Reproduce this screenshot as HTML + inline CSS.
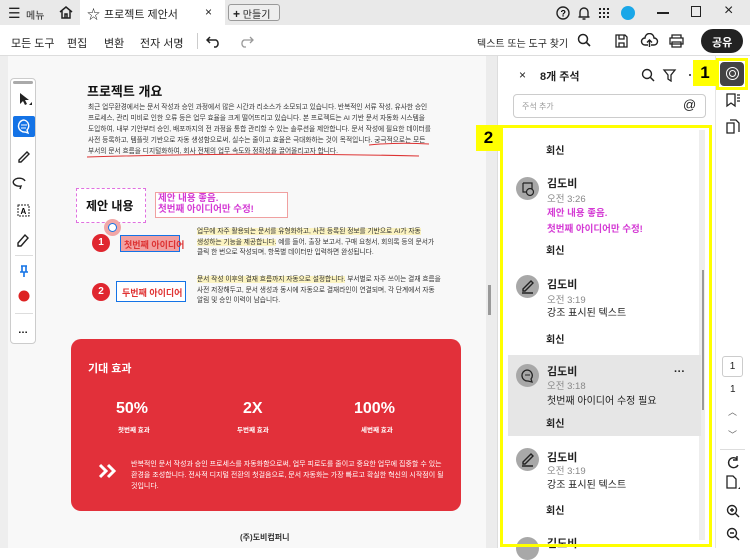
<!DOCTYPE html>
<html><head><meta charset="utf-8"><style>
*{margin:0;padding:0;box-sizing:border-box}
body{width:750px;height:548px;overflow:hidden;position:relative;font-family:"Liberation Sans","Noto Sans CJK KR",sans-serif;background:#fff;color:#222}
.a{position:absolute;white-space:nowrap}
.t{font-size:11px}
.p{font-size:6.7px;color:#333;white-space:nowrap}
.tm{font-size:9.5px;color:#888}
.av{position:absolute;left:516px}
</style></head><body>
<!-- title bar -->
<div class="a" style="left:0;top:0;width:750px;height:25px;background:#e9e9e9"></div>
<div class="a" style="left:80px;top:0;width:145px;height:25px;background:#fff"></div>
<div class="a t" style="left:8px;top:5px;font-size:14px">☰</div>
<div class="a" style="left:26px;top:7px;font-size:10px">메뉴</div>
<svg class="a" style="left:58px;top:5px" width="16" height="15"><path d="M2 7L8 2L14 7M4 6V13H12V6M7 13V9H9V13" fill="none" stroke="#222" stroke-width="1.5"/></svg>
<div class="a" style="left:87px;top:4px;font-size:13px">☆</div>
<div class="a t" style="left:104px;top:6px">프로젝트 제안서</div>
<div class="a" style="left:205px;top:5px;font-size:12px">×</div>
<div class="a" style="left:228px;top:4px;width:52px;height:17px;border:1px solid #999;border-radius:3px;background:#eee;font-size:10px;padding:1px 0 0 4px"><b style="font-size:12px">+</b> 만들기</div>
<svg class="a" style="left:555px;top:5px" width="90" height="16"><circle cx="8" cy="8" r="6" fill="none" stroke="#222" stroke-width="1.4"/><text x="5.5" y="11.5" font-size="9" font-weight="bold">?</text><path d="M25 12V7a4 4 0 0 1 8 0v5h1.5H23.5z M27.5 14h3" fill="none" stroke="#222" stroke-width="1.4"/><g fill="#222"><rect x="44" y="3" width="2" height="2"/><rect x="48" y="3" width="2" height="2"/><rect x="52" y="3" width="2" height="2"/><rect x="44" y="7" width="2" height="2"/><rect x="48" y="7" width="2" height="2"/><rect x="52" y="7" width="2" height="2"/><rect x="44" y="11" width="2" height="2"/><rect x="48" y="11" width="2" height="2"/><rect x="52" y="11" width="2" height="2"/></g><circle cx="73" cy="8" r="7" fill="#1aa7e8"/></svg>
<div class="a" style="left:657px;top:12px;width:12px;height:1.5px;background:#222"></div>
<div class="a" style="left:691px;top:6px;width:10px;height:11px;border:1.3px solid #222"></div>
<div class="a" style="left:724px;top:2px;font-size:16px">×</div>
<!-- toolbar -->
<div class="a t" style="left:11px;top:35px">모든 도구</div>
<div class="a t" style="left:67px;top:35px">편집</div>
<div class="a t" style="left:104px;top:35px">변환</div>
<div class="a t" style="left:140px;top:35px">전자 서명</div>
<div class="a" style="left:197px;top:33px;width:1px;height:16px;background:#ccc"></div>
<svg class="a" style="left:206px;top:33px" width="50" height="16"><path d="M4 4L1 7L4 10M1 7H10a4 4 0 0 1 0 7H8" fill="none" stroke="#222" stroke-width="1.5"/><path d="M44 4L47 7L44 10M47 7H38a4 4 0 0 0 0 7H40" fill="none" stroke="#999" stroke-width="1.3"/></svg>
<div class="a" style="left:477px;top:35px;font-size:10px">텍스트 또는 도구 찾기</div>
<svg class="a" style="left:577px;top:33px" width="110" height="16"><circle cx="6" cy="6" r="4.5" fill="none" stroke="#222" stroke-width="1.5"/><path d="M9.5 9.5L13 13" stroke="#222" stroke-width="1.6"/><path d="M39 2h9l2 2v10H39z M42 2v4h5V2 M42 14v-4h5v4" fill="none" stroke="#222" stroke-width="1.3"/><path d="M71 12h-3a3.5 3.5 0 0 1 0-7a4.5 4.5 0 0 1 9 0a3.5 3.5 0 0 1 0 7h-3M72.5 14V7M70 9.5l2.5-2.5l2.5 2.5" fill="none" stroke="#222" stroke-width="1.4"/><path d="M95 5V2h9v3M93 5h13v6h-13z M95 9h9v5h-9z" fill="none" stroke="#222" stroke-width="1.3"/></svg>
<div class="a" style="left:701px;top:29px;width:42px;height:24px;border-radius:12px;background:#222;color:#fff;font-size:11px;font-weight:bold;padding:5px 0 0 11px">공유</div>
<div class="a" style="left:0;top:55px;width:750px;height:1px;background:#ddd"></div>
<!-- left area -->
<div class="a" style="left:0;top:56px;width:486px;height:492px;background:#f8f8f8"></div>
<div class="a" style="left:0;top:56px;width:8px;height:492px;background:#eee"></div>
<div class="a" style="left:486px;top:56px;width:12px;height:492px;background:#ececec"></div>
<div class="a" style="left:488px;top:285px;width:3px;height:30px;background:#999"></div>
<div class="a" style="left:497px;top:56px;width:1px;height:492px;background:#ddd"></div>
<!-- tools -->
<div class="a" style="left:10px;top:78px;width:26px;height:266px;border:1px solid #ccc;border-radius:4px;background:#fff"></div>
<div class="a" style="left:13px;top:81px;width:20px;height:3px;background:#aaa;border-radius:2px"></div>
<svg class="a" style="left:12px;top:88px" width="24" height="260"><path d="M8 5l0 11l3-3l2 4l2-1l-2-4h4z" fill="#222"/><path d="M17 17h3v-3z" fill="#222"/><rect x="1" y="28" width="22" height="21" rx="2" fill="#1473e6"/><path d="M12 32a6 6 0 1 0 1 12l3 1l-1-3a6 6 0 0 0-3-10z" fill="none" stroke="#fff" stroke-width="1.4"/><path d="M9 37h6M9 40h5" stroke="#fff"/><path d="M7 72l8-8l2 2l-8 8h-2z" fill="none" stroke="#222" stroke-width="1.4"/><path d="M13 93a6 4 0 1 0-4 5l-1 3" fill="none" stroke="#222" stroke-width="1.4"/><rect x="6" y="117" width="11" height="11" fill="none" stroke="#222" stroke-dasharray="2 1"/><text x="8.5" y="126" font-size="8" font-weight="bold">A</text><path d="M6 155l7-8l3 3l-7 8h-3z" fill="none" stroke="#222" stroke-width="1.4"/><rect x="3" y="167" width="18" height="1" fill="#ddd"/><path d="M9 178h6M10 178v6h4v-6M8 184h8M12 184v5" fill="none" stroke="#1473e6" stroke-width="1.6"/><circle cx="12" cy="208" r="5.5" fill="#d22"/><rect x="3" y="225" width="18" height="1" fill="#ddd"/><text x="6" y="245" font-size="10" font-weight="bold">…</text></svg>
<!-- document -->
<div class="a" style="left:87px;top:81px;font-size:13px;font-weight:bold;color:#111">프로젝트 개요</div>
<div class="a p" style="left:88px;top:102px;line-height:11px">최근 업무환경에서는 문서 작성과 승인 과정에서 많은 시간과 리소스가 소모되고 있습니다. 반복적인 서류 작성, 유사한 승인<br>프로세스, 관리 미비로 인한 오류 등은 업무 효율을 크게 떨어뜨리고 있습니다. 본 프로젝트는 AI 기반 문서 자동화 시스템을<br>도입하여, 내부 기안부터 승인, 배포까지의 전 과정을 통합 관리할 수 있는 솔루션을 제안합니다. 문서 작성에 필요한 데이터를<br>사전 등록하고, 템플릿 기반으로 자동 생성함으로써, 실수는 줄이고 효율은 극대화하는 것이 목적입니다. 궁극적으로는 모든<br>부서의 문서 흐름을 디지털화하여, 회사 전체의 업무 속도와 정확성을 끌어올리고자 합니다.</div>
<svg class="a" style="left:84px;top:135px" width="345" height="25"><path d="M285 10q30-3 60-1M3 22q170-5 332-1" fill="none" stroke="#d33" stroke-width="1"/></svg>
<div class="a" style="left:76px;top:188px;width:70px;height:35px;border:1.5px dashed #e070e0;background:#fff;font-size:12px;font-weight:bold;padding:8px 0 0 9px;color:#111">제안 내용</div>
<div class="a" style="left:155px;top:192px;width:133px;height:26px;border:1px solid #f0a0a0;background:#fff;font-size:9.5px;font-weight:bold;color:#d43ad4;line-height:11px;padding:0 0 0 2px">제안 내용 좋음.<br>첫번째 아이디어만 수정!</div>
<div class="a" style="left:104px;top:219px;width:17px;height:17px;border-radius:50%;background:#f1a7a7"></div>
<div class="a" style="left:108px;top:223px;width:9px;height:9px;border-radius:50%;border:1.5px solid #1473e6;background:#fff"></div>
<div class="a" style="left:92px;top:234px;width:18px;height:18px;border-radius:50%;background:#e0262f;color:#fff;font-size:10px;font-weight:bold;text-align:center;line-height:18px">1</div>
<div class="a" style="left:120px;top:235px;width:60px;height:17px;border:1.5px solid #1473e6;background:#f1a0a0;font-size:9px;font-weight:bold;color:#d33;padding:2px 0 0 3px">첫번째 아이디어</div>
<div class="a" style="left:92px;top:283px;width:18px;height:18px;border-radius:50%;background:#e0262f;color:#fff;font-size:10px;font-weight:bold;text-align:center;line-height:18px">2</div>
<div class="a" style="left:116px;top:281px;width:70px;height:21px;border:1.5px solid #1473e6;background:#fff;font-size:9px;font-weight:bold;color:#e03333;padding:4px 0 0 5px">두번째 아이디어</div>
<div class="a p" style="left:197px;top:227px;line-height:10.5px"><span style="background:#fbf3c0">업무에 자주 활용되는 문서를 유형화하고, 사전 등록된 정보를 기반으로 AI가 자동</span><br><span style="background:#fbf3c0">생성하는 기능을 제공합니다.</span> 예를 들어, 출장 보고서, 구매 요청서, 회의록 등의 문서가<br>클릭 한 번으로 작성되며, 항목별 데이터만 입력하면 완성됩니다.</div>
<div class="a p" style="left:197px;top:275px;line-height:10.5px"><span style="background:#fbf3c0">문서 작성 이후의 결재 흐름까지 자동으로 설정합니다.</span> 부서별로 자주 쓰이는 결재 흐름을<br>사전 저장해두고, 문서 생성과 동시에 자동으로 결재라인이 연결되며, 각 단계에서 자동<br>알림 및 승인 이력이 남습니다.</div>
<div class="a" style="left:71px;top:339px;width:390px;height:172px;border-radius:10px;background:#e2303a"></div>
<div class="a" style="left:88px;top:360px;font-size:11px;font-weight:bold;color:#fff">기대 효과</div>
<div class="a" style="left:116px;top:400px;font-size:16px;font-weight:bold;color:#fff">50%</div>
<div class="a" style="left:118px;top:424px;font-size:6.5px;font-weight:bold;color:#fff">첫번째 효과</div>
<div class="a" style="left:243px;top:400px;font-size:16px;font-weight:bold;color:#fff">2X</div>
<div class="a" style="left:237px;top:424px;font-size:6.5px;font-weight:bold;color:#fff">두번째 효과</div>
<div class="a" style="left:354px;top:400px;font-size:16px;font-weight:bold;color:#fff">100%</div>
<div class="a" style="left:361px;top:424px;font-size:6.5px;font-weight:bold;color:#fff">세번째 효과</div>
<svg class="a" style="left:97px;top:463px" width="22" height="16"><path d="M3 2l6 6l-6 6M11 2l6 6l-6 6" fill="none" stroke="#fff" stroke-width="3"/></svg>
<div class="a" style="left:131px;top:459px;font-size:7px;color:#fff;line-height:11px">반복적인 문서 작성과 승인 프로세스를 자동화함으로써, 업무 피로도를 줄이고 중요한 업무에 집중할 수 있는<br>환경을 조성합니다. 전사적 디지털 전환의 첫걸음으로, 문서 자동화는 가장 빠르고 확실한 혁신의 시작점이 될<br>것입니다.</div>
<div class="a" style="left:240px;top:532px;font-size:8px;font-weight:bold;color:#333">(주)도비컴퍼니</div>
<!-- panel -->
<div class="a" style="left:519px;top:68px;font-size:12px">×</div>
<div class="a" style="left:540px;top:68px;font-size:11px;font-weight:bold">8개 주석</div>
<svg class="a" style="left:641px;top:68px" width="50" height="14"><circle cx="6" cy="6" r="4.5" fill="none" stroke="#222" stroke-width="1.4"/><path d="M9.5 9.5L13 13" stroke="#222" stroke-width="1.5"/><path d="M23 2h11l-4 5v6l-3-2V7z" fill="none" stroke="#222" stroke-width="1.3"/><circle cx="49" cy="7" r="1" fill="#222"/></svg>
<div class="a" style="left:513px;top:94px;width:193px;height:24px;border:1px solid #ccc;border-radius:4px;font-size:8px;color:#999;padding:6px 0 0 8px">주석 추가</div>
<div class="a" style="left:683px;top:97px;font-size:13px;color:#222">@</div>
<div class="a" style="left:699px;top:130px;width:6px;height:410px;background:#eee"></div>
<div class="a" style="left:702px;top:270px;width:2px;height:140px;background:#999"></div>
<div class="a" style="left:508px;top:355px;width:193px;height:81px;background:#e6e6e6"></div>
<div class="a" style="left:546px;top:142px;font-size:10px;font-weight:bold">회신</div>
<svg class="av" style="top:177px" width="23" height="23"><circle cx="11.5" cy="11.5" r="11.5" fill="#a8a8a8"/><path d="M7 6h9v9M7 6v9h3" fill="none" stroke="#222" stroke-width="1.2"/><circle cx="14" cy="15" r="3.5" fill="#a8a8a8" stroke="#222" stroke-width="1.2"/></svg>
<div class="a" style="left:547px;top:175px;font-size:11px;font-weight:bold">김도비</div>
<div class="a tm" style="left:547px;top:191px">오전 3:26</div>
<div class="a" style="left:547px;top:206px;font-size:9.5px;font-weight:bold;color:#d43ad4;line-height:16px">제안 내용 좋음.<br>첫번째 아이디어만 수정!</div>
<div class="a" style="left:546px;top:242px;font-size:10px;font-weight:bold">회신</div>
<svg class="av" style="top:275px" width="23" height="23"><circle cx="11.5" cy="11.5" r="11.5" fill="#a8a8a8"/><path d="M7 14l8-8l2 2l-8 8h-2zM6 18h11" fill="none" stroke="#222" stroke-width="1.4"/></svg>
<div class="a" style="left:547px;top:276px;font-size:11px;font-weight:bold">김도비</div>
<div class="a tm" style="left:547px;top:292px">오전 3:19</div>
<div class="a" style="left:547px;top:304px;font-size:10px">강조 표시된 텍스트</div>
<div class="a" style="left:546px;top:331px;font-size:10px;font-weight:bold">회신</div>
<svg class="av" style="top:364px" width="23" height="23"><circle cx="11.5" cy="11.5" r="11.5" fill="#a8a8a8"/><path d="M11 6a5.5 5.5 0 1 0 1 11l4 1l-1-3a5.5 5.5 0 0 0-4-9z" fill="none" stroke="#222" stroke-width="1.3"/><path d="M9 11h5" stroke="#222"/></svg>
<div class="a" style="left:547px;top:363px;font-size:11px;font-weight:bold">김도비</div>
<div class="a tm" style="left:547px;top:378px">오전 3:18</div>
<div class="a" style="left:547px;top:392px;font-size:10px">첫번째 아이디어 수정 필요</div>
<div class="a" style="left:546px;top:415px;font-size:10px;font-weight:bold">회신</div>
<div class="a" style="left:674px;top:366px;font-size:11px;font-weight:bold">···</div>
<svg class="av" style="top:448px" width="23" height="23"><circle cx="11.5" cy="11.5" r="11.5" fill="#a8a8a8"/><path d="M7 14l8-8l2 2l-8 8h-2zM6 18h11" fill="none" stroke="#222" stroke-width="1.4"/></svg>
<div class="a" style="left:547px;top:449px;font-size:11px;font-weight:bold">김도비</div>
<div class="a tm" style="left:547px;top:463px">오전 3:19</div>
<div class="a" style="left:547px;top:476px;font-size:10px">강조 표시된 텍스트</div>
<div class="a" style="left:546px;top:502px;font-size:10px;font-weight:bold">회신</div>
<svg class="av" style="top:537px" width="23" height="23"><circle cx="11.5" cy="11.5" r="11.5" fill="#a8a8a8"/></svg>
<div class="a" style="left:547px;top:535px;font-size:11px;font-weight:bold">김도비</div>
<!-- right rail -->
<div class="a" style="left:715px;top:56px;width:1px;height:492px;background:#e5e5e5"></div>
<div class="a" style="left:720px;top:62px;width:24px;height:24px;border-radius:4px;background:#444"></div>
<div class="a" style="left:726px;top:67px;width:13px;height:13px;border-radius:50%;border:1.5px solid #fff"></div>
<div class="a" style="left:729px;top:70px;width:7px;height:7px;border-radius:50%;border:1.2px solid #fff"></div>
<svg class="a" style="left:724px;top:92px" width="18" height="50"><path d="M3 2h8v12l-4-3l-4 3z M13 3h3M13 6h3M13 9h3" fill="none" stroke="#222" stroke-width="1.3"/><path d="M3 31h7v10h-7z M6 28h6l3 3v9" fill="none" stroke="#222" stroke-width="1.3"/></svg>
<div class="a" style="left:722px;top:356px;width:21px;height:21px;border:1px solid #ccc;border-radius:3px;font-size:10px;text-align:center;line-height:19px">1</div>
<div class="a" style="left:730px;top:384px;font-size:10px">1</div>
<div class="a" style="left:728px;top:405px;font-size:9px;color:#666">︿</div>
<div class="a" style="left:728px;top:428px;font-size:9px;color:#666">﹀</div>
<div class="a" style="left:720px;top:449px;width:25px;height:1px;background:#ddd"></div>
<svg class="a" style="left:724px;top:455px" width="20" height="90"><path d="M13 4a5 5 0 1 0 1 6M13 1v4h-4" fill="none" stroke="#222" stroke-width="1.4"/><path d="M3 21h6l3 3v9h-9z" fill="none" stroke="#222" stroke-width="1.3"/><path d="M14 34l2-2v2z" fill="#222"/><circle cx="8" cy="55" r="4.5" fill="none" stroke="#222" stroke-width="1.4"/><path d="M6 55h4M8 53v4M11 58l4 4" stroke="#222" stroke-width="1.4"/><circle cx="8" cy="78" r="4.5" fill="none" stroke="#222" stroke-width="1.4"/><path d="M6 78h4M11 81l4 4" stroke="#222" stroke-width="1.4"/></svg>
<!-- yellow highlights -->
<div class="a" style="left:500px;top:125px;width:212px;height:422px;border:3px solid #ffff00"></div>
<div class="a" style="left:476px;top:125px;width:25px;height:26px;background:#ffff00;font-size:17px;font-weight:bold;text-align:center;line-height:26px;color:#000">2</div>
<div class="a" style="left:693px;top:60px;width:24px;height:26px;background:#ffff00;font-size:17px;font-weight:bold;text-align:center;line-height:26px;color:#000">1</div>
<div class="a" style="left:716px;top:58px;width:32px;height:32px;border:3px solid #ffff00"></div>
</body></html>
